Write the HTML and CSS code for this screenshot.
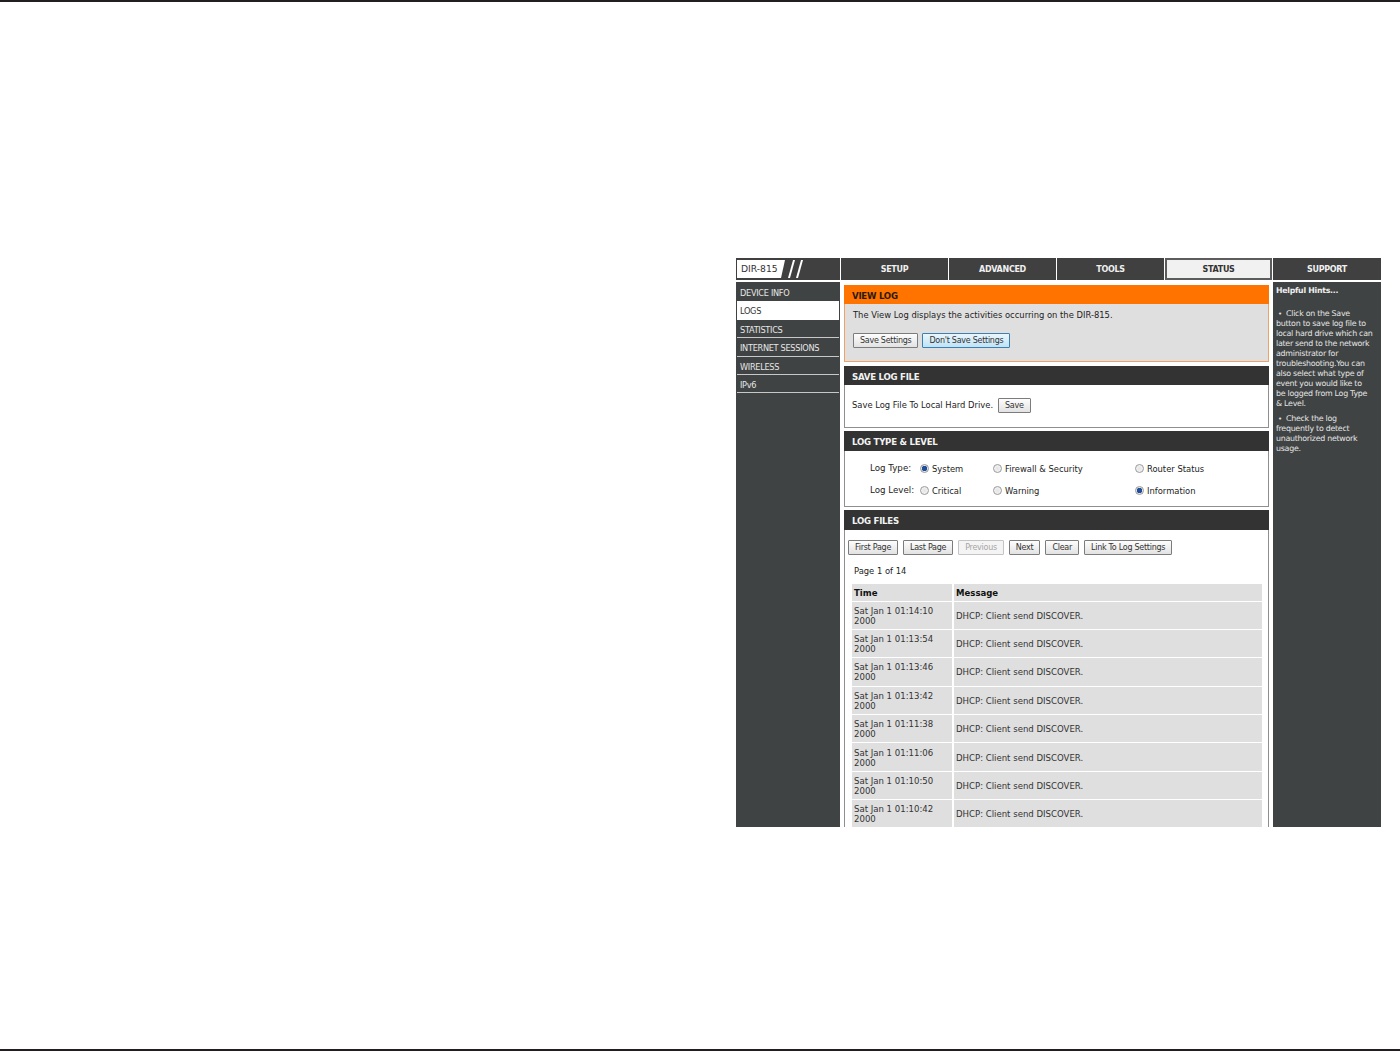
FILE: index.html
```html
<!DOCTYPE html>
<html lang="en">
<head>
<meta charset="utf-8">
<title>DIR-815 View Log</title>
<link rel="stylesheet" href="styles.css">
</head>
<body>
<div class="rule"></div>
<main class="page">
  <div class="shot">
    <header class="topbar">
      <div class="logo">
        <svg class="logo-art" width="104" height="22" viewBox="0 0 104 22">
          <rect width="104" height="22" fill="#404040"/>
          <polygon points="1,2 49,2 45,20 1,20" fill="#fff"/>
          <polygon points="52,20 54,20 59,2 57,2" fill="#fff"/>
          <polygon points="60,20 62,20 67,2 65,2" fill="#fff"/>
        </svg>
        <span class="logo-text">DIR-815</span>
      </div>
      <nav class="tabs">
        <a class="tab">SETUP</a>
        <a class="tab">ADVANCED</a>
        <a class="tab">TOOLS</a>
        <a class="tab tab-active">STATUS</a>
        <a class="tab tab-last">SUPPORT</a>
      </nav>
    </header>
    <div class="columns">
      <aside class="sidebar">
        <a class="side-item">DEVICE INFO</a>
        <a class="side-item side-active">LOGS</a>
        <a class="side-item">STATISTICS</a>
        <a class="side-item">INTERNET SESSIONS</a>
        <a class="side-item">WIRELESS</a>
        <a class="side-item">IPv6</a>
      </aside>
      <section class="content">
        <div class="box box-orange">
          <h2 class="box-head head-orange">VIEW LOG</h2>
          <div class="box-body body-view">
            <p class="intro">The View Log displays the activities occurring on the DIR-815.</p>
            <div class="btn-row">
              <button class="btn">Save Settings</button>
              <button class="btn btn-focus">Don't Save Settings</button>
            </div>
          </div>
        </div>
        <div class="box">
          <h2 class="box-head">SAVE LOG FILE</h2>
          <div class="box-body body-save">
            <span>Save Log File To Local Hard Drive.</span>
            <button class="btn">Save</button>
          </div>
        </div>
        <div class="box">
          <h2 class="box-head head-tall">LOG TYPE &amp; LEVEL</h2>
          <div class="box-body body-type">
            <span class="radio-label">Log Type:</span>
            <label class="radio-opt"><input class="radio" type="radio" name="t" checked>System</label>
            <label class="radio-opt"><input class="radio" type="radio" name="t">Firewall &amp; Security</label>
            <label class="radio-opt"><input class="radio" type="radio" name="t">Router Status</label>
            <span class="radio-label">Log Level:</span>
            <label class="radio-opt"><input class="radio" type="radio" name="l">Critical</label>
            <label class="radio-opt"><input class="radio" type="radio" name="l">Warning</label>
            <label class="radio-opt"><input class="radio" type="radio" name="l" checked>Information</label>
          </div>
        </div>
        <div class="box box-open">
          <h2 class="box-head head-tall">LOG FILES</h2>
          <div class="box-body body-files">
            <div class="pager">
              <button class="btn">First Page</button>
              <button class="btn">Last Page</button>
              <button class="btn btn-off">Previous</button>
              <button class="btn">Next</button>
              <button class="btn">Clear</button>
              <button class="btn">Link To Log Settings</button>
            </div>
            <p class="page-no">Page 1 of 14</p>
            <table class="log">
              <thead>
                <tr><th class="col-time">Time</th><th>Message</th></tr>
              </thead>
              <tbody>
                <tr><td>Sat Jan 1 01:14:10 2000</td><td>DHCP: Client send DISCOVER.</td></tr>
                <tr><td>Sat Jan 1 01:13:54 2000</td><td>DHCP: Client send DISCOVER.</td></tr>
                <tr><td>Sat Jan 1 01:13:46 2000</td><td>DHCP: Client send DISCOVER.</td></tr>
                <tr><td>Sat Jan 1 01:13:42 2000</td><td>DHCP: Client send DISCOVER.</td></tr>
                <tr><td>Sat Jan 1 01:11:38 2000</td><td>DHCP: Client send DISCOVER.</td></tr>
                <tr><td>Sat Jan 1 01:11:06 2000</td><td>DHCP: Client send DISCOVER.</td></tr>
                <tr><td>Sat Jan 1 01:10:50 2000</td><td>DHCP: Client send DISCOVER.</td></tr>
                <tr><td>Sat Jan 1 01:10:42 2000</td><td>DHCP: Client send DISCOVER.</td></tr>
              </tbody>
            </table>
          </div>
        </div>
      </section>
      <aside class="hints">
        <h3 class="hints-title">Helpful Hints...</h3>
        <p class="hint"><span class="hint-first">Click on the Save</span><br>button to save log file to<br>local hard drive which can<br>later send to the network<br>administrator for<br>troubleshooting.You can<br>also select what type of<br>event you would like to<br>be logged from Log Type<br>&amp; Level.</p>
        <p class="hint"><span class="hint-first">Check the log</span><br>frequently to detect<br>unauthorized network<br>usage.</p>
      </aside>
    </div>
  </div>
</main>
<div class="rule"></div>
</body>
</html>
```

FILE: styles.css
```css
* { box-sizing: border-box; }
html, body { margin: 0; padding: 0; height: 100%; background: #fff; }
body {
  display: flex;
  flex-direction: column;
  height: 1051px;
  overflow: hidden;
  font-family: "DejaVu Sans", Verdana, sans-serif;
  font-size: 8.4px;
  color: #222;
}
.rule { height: 2px; background: #231f20; flex: none; }
.page { flex: 1; padding: 256px 0 0 736px; }
.shot { width: 645px; height: 569px; overflow: hidden; }

.topbar { display: flex; gap: 1px; height: 22px; }
.logo { position: relative; width: 104px; height: 22px; flex: none; }
.logo-art { display: block; }
.logo-text {
  position: absolute; left: 5px; top: 5px;
  font-size: 9.2px; line-height: 12px; color: #333; font-weight: 500;
}
.tabs { display: flex; gap: 1px; flex: 1; }
.tab {
  width: 107px;
  background: #404040;
  color: #f0f0f0;
  font-weight: 700;
  font-size: 8px;
  letter-spacing: -0.3px;
  line-height: 23px;
  text-align: center;
}
.tab-last { width: 108px; }
.tab-active { background: #f1f1f1; color: #333; border: 2px solid #5c5c5c; line-height: 19px; }

.columns { display: flex; margin-top: 2px; height: 545px; }
.sidebar { width: 104px; flex: none; background: #404343; padding: 1px 1px 0; }
.side-item {
  display: block;
  height: 18.4px;
  padding: 4px 3px 0;
  color: #e6e6e6;
  font-size: 8.2px;
  letter-spacing: -0.3px;
  line-height: 12px;
  border-bottom: 1px solid #c8c8c8;
}
.side-item:first-child { border-bottom: 0; }
.side-active { background: #fff; color: #333; border-bottom: 0; }

.content { width: 429px; flex: none; padding: 3px 0 0 4px; }
.box { border: 1px solid #8f8f8f; border-top: 0; margin-bottom: 3px; background: #fff; }
.box-open { margin-bottom: 0; border-bottom: 0; }
.box-orange { background: #dfdfdf; border-color: #eea267; margin-bottom: 4px; }
.box-head {
  margin: 0 -1px;
  height: 19px;
  padding-left: 8px;
  background: #333;
  color: #f2f2f2;
  font-size: 8.6px;
  letter-spacing: -0.25px;
  font-weight: 700;
  line-height: 22px;
}
.head-tall { height: 20px; }
.head-orange { background: #ff7300; color: #2b1a0c; }
.body-view { height: 57px; padding: 5px 0 0 8px; }
.intro { margin: 0; line-height: 12px; }
.btn-row { display: flex; gap: 4px; margin-top: 12px; }
.body-save { height: 42px; padding: 0 0 2px 7px; display: flex; align-items: center; gap: 5px; }

.btn {
  height: 15px;
  padding: 1px 6px 0;
  border: 1px solid #7c7c7c;
  border-radius: 1px;
  background: linear-gradient(#fdfdfd, #e2e2e2);
  color: #333;
  font-family: inherit;
  font-size: 8px;
  letter-spacing: -0.27px;
  line-height: 12px;
  white-space: nowrap;
}
.btn-focus { border-color: #3c7fb1; background: linear-gradient(#eaf6fd, #bfe3f7); }
.btn-off { color: #a6a6a6; border-color: #c4c4c4; background: #f4f4f4; }

.body-type {
  height: 55px;
  padding: 6px 0 0 25px;
  display: grid;
  grid-template-columns: 50px 73px 142px 1fr;
  grid-template-rows: 22px 22px;
  align-items: center;
}
.radio-label { font-size: 8.7px; }
.radio-opt { display: flex; align-items: center; gap: 3px; font-size: 8.4px; padding-top: 2px; }
.radio {
  appearance: none;
  width: 9px; height: 9px;
  margin: 0 0 2px;
  border: 1px solid #9a9a9a;
  border-radius: 50%;
  background: radial-gradient(circle, #e4e4e4, #f8f8f8);
  flex: none;
}
.radio:checked { background: radial-gradient(circle, #1f4f9a 0 2.5px, #e8e8e8 3px); }

.body-files { padding: 10px 0 0 3px; }
.pager { display: flex; gap: 5px; }
.page-no { margin: 10px 0 0 6px; line-height: 12px; }
.log {
  margin: 6px 0 0 4px;
  width: 410px;
  table-layout: fixed;
  border-collapse: separate;
  border-spacing: 0 1px;
  font-size: 8.55px;
}
.col-time { width: 102px; }
.log th, .log td {
  background: #dfdfdf;
  padding: 1px 2px 0;
  font-weight: 400;
  text-align: left;
  line-height: 10px;
  border-right: 2px solid #fff;
}
.log th { height: 16.5px; font-weight: 700; color: #111; }
.log th:last-child, .log td:last-child { border-right: 0; }
.log td { height: 27.4px; color: #333; }

.hints {
  width: 108px;
  flex: none;
  margin-left: 4px;
  padding: 3px 2px 0 3px;
  background: #404343;
  color: #e4e4e4;
  font-size: 7.9px;
  letter-spacing: -0.27px;
  line-height: 10px;
}
.hints-title { margin: 0 0 13px; font-size: 7.8px; font-weight: 700; line-height: 11px; color: #eee; }
.hint { margin: 0 0 5px; }
.hint-first { padding-left: 10px; position: relative; }
.hint-first::before { content: "•"; position: absolute; left: 2px; top: 0; font-size: 7px; }
```
